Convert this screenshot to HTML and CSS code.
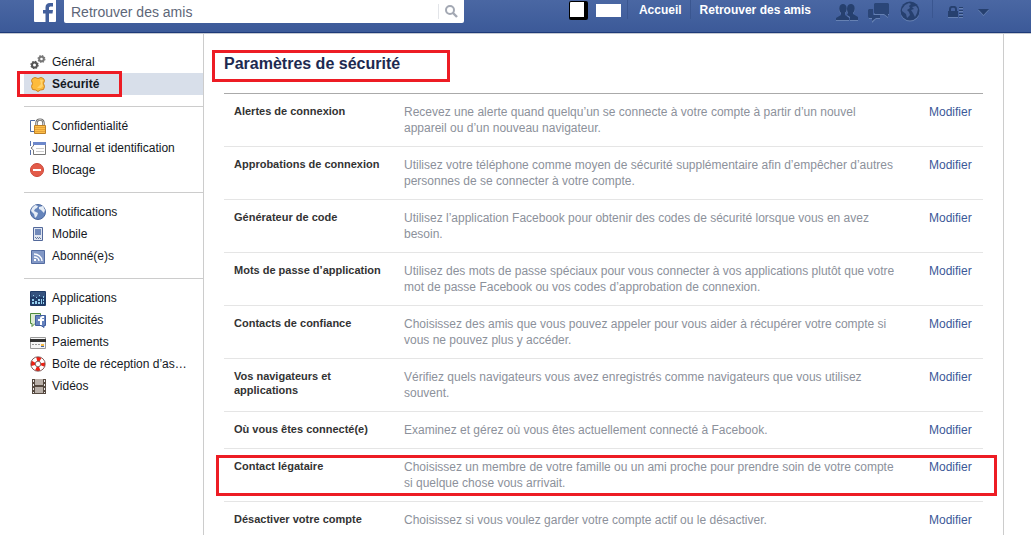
FILE: index.html
```html
<!DOCTYPE html>
<html lang="fr">
<head>
    <meta charset="UTF-8">
    <meta name="viewport" content="width=device-width, initial-scale=1.0">
    <title>Paramètres de sécurité</title>
    <link rel="stylesheet" href="styles.css">
</head>
<body>
    <header class="topbar">
        <a href="#" class="logo" aria-label="Facebook">
            <svg width="22" height="22" viewBox="0 0 22 22"><path d="M0 0h22v21a1 1 0 0 1-1 1H1a1 1 0 0 1-1-1z" fill="#fff"/><path d="M11.500 22v-8.500H9V10h2.500V7.500C11.500 4.500 13 3 16 3h3v3.500h-2c-1.500 0-2 .5-2 1.500v2h4l-.5 3.500H15V22z" fill="#43609c"/></svg>
        </a>
        <form class="search">
            <input type="text" class="search-input" placeholder="Retrouver des amis" aria-label="Retrouver des amis">
            <button type="button" class="search-btn" aria-label="Rechercher">
                <svg width="13" height="13" viewBox="0 0 13 13"><circle cx="5" cy="5" r="4" fill="none" stroke="#a3a8b3" stroke-width="2"/><path d="M8 8l4 4" stroke="#a3a8b3" stroke-width="2.4"/></svg>
            </button>
        </form>
        <nav class="top-nav">
            <span class="avatar"></span>
            <span class="username"></span>
            <a href="#" class="nav-link">Accueil</a>
            <a href="#" class="nav-link">Retrouver des amis</a>
            <a href="#" class="nav-icon friends" aria-label="Invitations">
                <svg width="22" height="19" viewBox="0 0 22 19"><g fill="#6681b3" transform="translate(0 1)"><path d="M0 17v-2l5-3v-2C2 7 3 1 7 1s5 6 2 9v2l4 3v2z"/><path d="M14 17v-3l-3-2 1-2c-2-4-1-9 3-9s5 6 2 9v1l5 3v3z"/></g><g fill="#26406f"><path d="M0 17v-2l5-3v-2C2 7 3 1 7 1s5 6 2 9v2l4 3v2z"/><path d="M14 17v-3l-3-2 1-2c-2-4-1-9 3-9s5 6 2 9v1l5 3v3z"/></g></svg>
            </a>
            <a href="#" class="nav-icon messages" aria-label="Messages">
                <svg width="22" height="20" viewBox="0 0 22 20"><g fill="#6681b3" transform="translate(0 1)"><path d="M6 0h15v11h-1v3l-4-3H6z"/><path d="M1 6h4v6h7v3H8l-4 4v-4H1z"/></g><g fill="#2b4678"><path d="M7 0h13l1 1v10h-1v3l-4-3H7l-1-1V1z"/><path d="M1 6h4v6h7v3H8l-4 3v-3H1l-1-1V7z"/></g></svg>
            </a>
            <a href="#" class="nav-icon globe" aria-label="Notifications">
                <svg width="20" height="21" viewBox="0 0 20 21"><circle cx="10" cy="11" r="9.500" fill="#6681b3"/><circle cx="10" cy="10" r="9.500" fill="#26406f"/><path d="M2 8l3-4 4-2 2 1-2 2 1 2-3 2 2 2 1 3-3 3-1-4-4-3zM12 6l4-1 2 3-1 4-2 4-2-4-2-3 3-1z" fill="#48639a"/></svg>
            </a>
            <a href="#" class="nav-icon privacy" aria-label="Confidentialité">
                <svg width="16" height="12" viewBox="0 0 16 12"><path d="M2 5V3c0-3 6-3 6 0v2" fill="none" stroke="#26406f" stroke-width="2"/><path d="M0 5h10v6H0zM11 1h4v1h-4zM11 4h4v1h-4zM11 7h4v1h-4zM11 10h4v1h-4z" fill="#26406f"/><path d="M0 11h10v1H0zM11 2h4v1h-4zM11 5h4v1h-4zM11 8h4v1h-4zM11 11h4v1h-4z" fill="#6681b3"/></svg>
            </a>
            <a href="#" class="nav-icon menu" aria-label="Menu">
                <svg width="11" height="7" viewBox="0 0 11 7"><path d="M0 1h11L5.500 7z" fill="#6681b3"/><path d="M0 0h11L5.500 6z" fill="#26406f"/></svg>
            </a>
        </nav>
    </header>

    <div class="page">
        <aside class="sidebar">
            <ul class="side-group">
                <li><a href="#" class="side-link">
                    <svg class="side-icon" viewBox="0 0 16 16"><g fill="none" stroke="#555"><circle cx="4.500" cy="11" r="2.500" stroke-width="2"/><circle cx="4.500" cy="11" r="3.600" stroke-width="1.200" stroke-dasharray="1.500 1.330"/><circle cx="11.500" cy="5" r="2.300" stroke-width="2" stroke="#777"/><circle cx="11.500" cy="5" r="3.400" stroke-width="1.200" stroke-dasharray="1.400 1.270" stroke="#777"/></g></svg>
                    <span>Général</span></a></li>
                <li><a href="#" class="side-link active">
                    <svg class="side-icon" viewBox="0 0 16 16"><path d="M2.500 2.500L5 1.500l3 1 3-1 2.500 1 1 2-1 3 1 3-1 3-3 .5L8 15.500 5.500 14l-3-.5-1-3 1-3-1-3z" fill="#fdbb3b" stroke="#c98322"/><path d="M10 4h3l-1 3 1 3-2 2H7l4-4z" fill="#ffd36d"/></svg>
                    <span>Sécurité</span></a></li>
            </ul>
            <ul class="side-group">
                <li><a href="#" class="side-link">
                    <svg class="side-icon" viewBox="0 0 16 16"><path d="M5 2.500H.5v11H5" fill="#fff" stroke="#4d6aa5"/><path d="M6.500 8V5c0-4.500 7-4.500 7 0v3" fill="none" stroke="#666" stroke-width="2.400"/><path d="M6.500 8V5c0-4.500 7-4.500 7 0v3" fill="none" stroke="#ccc"/><path d="M4.500 7.500h11v8h-11z" fill="#fdc04b" stroke="#bd8027"/><path d="M5 9.500h10M5 11.500h10M5 13.500h10" stroke="#e5a23a"/></svg>
                    <span>Confidentialité</span></a></li>
                <li><a href="#" class="side-link">
                    <svg class="side-icon" viewBox="0 0 16 16"><path d="M.5 1v5M.5 10v5" fill="none" stroke="#5872aa"/><path d="M3.500 2.500h12v12h-12V10L1 8l2.500-2z" fill="#fff" stroke="#777"/><path d="M3 2h13v3H3z" fill="#6d88cb"/><path d="M6 8.500h8M6 11.500h8" stroke="#ccc"/></svg>
                    <span>Journal et identification</span></a></li>
                <li><a href="#" class="side-link">
                    <svg class="side-icon" viewBox="0 0 16 16"><circle cx="7" cy="8" r="6.500" fill="#e35b49" stroke="#cb4638"/><path d="M3 7h8v2H3z" fill="#fff"/></svg>
                    <span>Blocage</span></a></li>
            </ul>
            <ul class="side-group">
                <li><a href="#" class="side-link">
                    <svg class="side-icon" viewBox="0 0 16 16"><circle cx="8" cy="8" r="7.500" fill="#6584bb" stroke="#4b689f"/><path d="M2 4l3-3 3 1-1 2-2 1-1 2 4 2-1 3-2 2-1-4-3-3zM9 3l4-1 2 4-1 3-3-3-2-1z" fill="#e6edf6"/></svg>
                    <span>Notifications</span></a></li>
                <li><a href="#" class="side-link">
                    <svg class="side-icon" viewBox="0 0 16 16"><path d="M3.500 1.500h9v13h-9z" fill="#dfe5f0" stroke="#53699b"/><path d="M5 3h6v6H5z" fill="#7189ba"/><path d="M5 11h1v1H5zM7 11h1v1H7zM9 11h1v1H9zM6 12h1v1H6zM8 12h1v1H8zM10 12h1v1h-1z" fill="#66799f"/></svg>
                    <span>Mobile</span></a></li>
                <li><a href="#" class="side-link">
                    <svg class="side-icon" viewBox="0 0 16 16"><path d="M1.500 2.500h13v13h-13z" fill="#8298c6" stroke="#536ba0"/><path d="M4 6c4 0 8 3 8 7M4 9c3 0 5 2 5 4" fill="none" stroke="#fff" stroke-width="1.500"/><path d="M4 11h2v2H4z" fill="#fff"/></svg>
                    <span>Abonné(e)s</span></a></li>
            </ul>
            <ul class="side-group">
                <li><a href="#" class="side-link">
                    <svg class="side-icon" viewBox="0 0 16 16"><rect y="1" width="16" height="15" rx="1" fill="#203b68"/><path d="M1 2h14v5H1z" fill="#35527f"/><path d="M2 9h2v2H2zM2 12h2v2H2zM5 11h2v3H5zM8 9h2v2H8zM8 12h2v2H8zM11 9h1v5h-1zM13 6h1v2h-1zM13 9h1v2h-1zM13 12h1v2h-1zM6 7h1v1H6zM9 5h1v1H9zM3 5h1v1H3z" fill="#94d0ef"/></svg>
                    <span>Applications</span></a></li>
                <li><a href="#" class="side-link">
                    <svg class="side-icon" viewBox="0 0 16 16"><path d="M.5 1.500h10v10H5l-3 3v-3H.5z" fill="#dcebd2" stroke="#4d8b3c"/><path d="M5.500 3.500h10v10H14v2l-3-2H5.500z" fill="#6682bd" stroke="#405e9f"/><path d="M10 13V9H8V7h2c0-3 2-3 4-3v2c-2 0-2 0-2 1h2v2h-2v4z" fill="#fff"/></svg>
                    <span>Publicités</span></a></li>
                <li><a href="#" class="side-link">
                    <svg class="side-icon" viewBox="0 0 16 16"><path d="M.5 3.500h15v11H.5z" fill="#f6f6f6" stroke="#999"/><path d="M0 5h16v3H0z" fill="#333"/><path d="M2 10.500h8" stroke="#999" stroke-dasharray="2 1"/><path d="M11 10h3v2h-3z" fill="#f5b944"/><path d="M11 12h3v1h-3z" fill="#4768ab"/></svg>
                    <span>Paiements</span></a></li>
                <li><a href="#" class="side-link">
                    <svg class="side-icon" viewBox="0 0 16 16"><circle cx="8" cy="8" r="5" fill="none" stroke="#fff" stroke-width="4"/><circle cx="8" cy="8" r="5" fill="none" stroke="#ef2115" stroke-width="4" stroke-dasharray="3.927 3.927" stroke-dashoffset="1.960"/><circle cx="8" cy="8" r="7.200" fill="none" stroke="#653b38" stroke-width=".8"/><circle cx="8" cy="8" r="2.800" fill="#fff" stroke="#653b38" stroke-width=".8"/></svg>
                    <span>Boîte de réception d’as…</span></a></li>
                <li><a href="#" class="side-link">
                    <svg class="side-icon" viewBox="0 0 16 16"><path d="M2 1h14v15H2z" fill="#554940"/><path d="M5 1h8v6H5zM5 9h8v6H5z" fill="#b9b0a9"/><path d="M3 2h1v2H3zM3 6h1v2H3zM3 10h1v2H3zM3 14h1v1H3zM14 2h1v2h-1zM14 6h1v2h-1zM14 10h1v2h-1zM14 14h1v1h-1z" fill="#eee"/></svg>
                    <span>Vidéos</span></a></li>
            </ul>
        </aside>

        <main class="content">
            <h1 class="title">Paramètres de sécurité</h1>
            <ul class="settings">
                <li class="setting">
                    <h2 class="label">Alertes de connexion</h2>
                    <p class="desc">Recevez une alerte quand quelqu’un se connecte à votre compte à partir d’un nouvel appareil ou d’un nouveau navigateur.</p>
                    <a href="#" class="edit">Modifier</a>
                </li>
                <li class="setting">
                    <h2 class="label">Approbations de connexion</h2>
                    <p class="desc">Utilisez votre téléphone comme moyen de sécurité supplémentaire afin d’empêcher d’autres personnes de se connecter à votre compte.</p>
                    <a href="#" class="edit">Modifier</a>
                </li>
                <li class="setting">
                    <h2 class="label">Générateur de code</h2>
                    <p class="desc">Utilisez l’application Facebook pour obtenir des codes de sécurité lorsque vous en avez besoin.</p>
                    <a href="#" class="edit">Modifier</a>
                </li>
                <li class="setting">
                    <h2 class="label">Mots de passe d’application</h2>
                    <p class="desc">Utilisez des mots de passe spéciaux pour vous connecter à vos applications plutôt que votre mot de passe Facebook ou vos codes d’approbation de connexion.</p>
                    <a href="#" class="edit">Modifier</a>
                </li>
                <li class="setting">
                    <h2 class="label">Contacts de confiance</h2>
                    <p class="desc">Choisissez des amis que vous pouvez appeler pour vous aider à récupérer votre compte si vous ne pouvez plus y accéder.</p>
                    <a href="#" class="edit">Modifier</a>
                </li>
                <li class="setting">
                    <h2 class="label">Vos navigateurs et applications</h2>
                    <p class="desc">Vérifiez quels navigateurs vous avez enregistrés comme navigateurs que vous utilisez souvent.</p>
                    <a href="#" class="edit">Modifier</a>
                </li>
                <li class="setting">
                    <h2 class="label">Où vous êtes connecté(e)</h2>
                    <p class="desc">Examinez et gérez où vous êtes actuellement connecté à Facebook.</p>
                    <a href="#" class="edit">Modifier</a>
                </li>
                <li class="setting marked">
                    <h2 class="label">Contact légataire</h2>
                    <p class="desc">Choisissez un membre de votre famille ou un ami proche pour prendre soin de votre compte si quelque chose vous arrivait.</p>
                    <a href="#" class="edit">Modifier</a>
                </li>
                <li class="setting">
                    <h2 class="label">Désactiver votre compte</h2>
                    <p class="desc">Choisissez si vous voulez garder votre compte actif ou le désactiver.</p>
                    <a href="#" class="edit">Modifier</a>
                </li>
            </ul>
        </main>
    </div>
</body>
</html>
```
FILE: styles.css
```css
*,
*::after {
    margin: 0;
    padding: 0;
    box-sizing: border-box;
}

body {
    min-height: 100vh;
    display: flex;
    flex-direction: column;
    background: #fff;
    font-family: "Liberation Sans", Arial, sans-serif;
    font-size: 12px;
    line-height: 16px;
    color: #141823;
}

ul {
    list-style: none;
}

a {
    color: #3b5998;
    text-decoration: none;
}

svg {
    display: block;
}

/* Top bar */
.topbar {
    display: flex;
    align-items: flex-start;
    height: 34px;
    padding: 0 42px 0 34px;
    background: linear-gradient(#4a67a3, #3b5998);
    border-bottom: 1px solid #c5c9d1;
    box-shadow: inset 0 -1px 0 #1d3978;
}

.search {
    display: flex;
    align-items: center;
    width: 400px;
    height: 23px;
    margin-left: 8px;
    background: #fff;
    border-radius: 0 0 2px 2px;
}

.search-input {
    flex: 1;
    min-width: 0;
    height: 22px;
    padding: 0 7px;
    border: 0;
    outline: 0;
    background: none;
    font-family: inherit;
    font-size: 14px;
}

.search-input::placeholder {
    color: #5d6678;
    opacity: 1;
}

.search-btn {
    height: 15px;
    padding: 0 6px;
    border: 0;
    border-left: 1px solid #e3e5e9;
    background: none;
}

.top-nav {
    display: flex;
    align-items: flex-start;
    margin-left: auto;
}

.avatar {
    width: 19px;
    height: 19px;
    margin-top: 1px;
    background: #fff;
    border: solid #000;
    border-width: 1px 4px 3px 1px;
    border-radius: 2px;
}

.username {
    width: 25px;
    height: 13px;
    margin: 4px 6px 0 8px;
    background: #fff;
}

.nav-link {
    height: 19px;
    padding: 2px 8px 0 11px;
    border-left: 1px solid #3a5690;
    color: #fff;
    font-weight: bold;
}

.nav-link + .nav-link {
    padding: 2px 0 0 9px;
}

.nav-icon {
    padding-top: 3px;
}

.friends {
    margin-left: 25px;
}

.messages {
    margin-left: 10px;
}

.globe {
    padding-top: 1px;
    margin-left: 10px;
}

.privacy {
    height: 18px;
    padding: 6px 0 0 15px;
    margin-left: 12px;
    border-left: 1px solid #3a5690;
}

.menu {
    padding-top: 9px;
    margin-left: 14px;
}

/* Page columns */
.page {
    flex: 1;
    display: flex;
    padding: 0 27px 0 24px;
}

.sidebar {
    width: 179px;
    padding-top: 17px;
}

.side-group + .side-group {
    margin-top: 11px;
    padding-top: 8px;
    border-top: 1px solid #ccc;
}

.side-link {
    position: relative;
    display: flex;
    align-items: center;
    gap: 6px;
    height: 22px;
    padding: 0 12px 0 6px;
    color: #141823;
    white-space: nowrap;
}

.side-icon {
    flex: none;
    width: 16px;
    height: 16px;
}

.active {
    background: #d8dfea;
    font-weight: bold;
}

.content {
    flex: 1;
    min-width: 0;
    padding: 20px 20px 0;
    border: solid #ccc;
    border-width: 0 1px;
}

.title {
    position: relative;
    padding-bottom: 19px;
    border-bottom: 1px solid #aaa;
    font-size: 16px;
    line-height: 20px;
    color: #1d2a50;
}

/* Settings list */
.setting {
    position: relative;
    display: grid;
    grid-template-columns: 170px 1fr 54px;
    padding: 10px 0 10px 10px;
    border-bottom: 1px solid #e5e5e5;
}

.setting:last-child {
    padding-bottom: 5px;
    border-bottom: 0;
}

.label {
    padding-right: 20px;
    font-size: 11px;
    line-height: 14px;
    color: #333;
}

.desc {
    padding-right: 31px;
    color: #8c919b;
}

/* Red highlight frames */
.active::after,
.title::after,
.marked::after {
    content: "";
    position: absolute;
    border: 3px solid #ed1c24;
    pointer-events: none;
}

.active::after {
    top: -2px;
    left: -7px;
    width: 105px;
    height: 26px;
}

.title::after {
    top: -4px;
    left: -12px;
    width: 238px;
    height: 32px;
}

.marked::after {
    top: 6px;
    left: -8px;
    right: -14px;
    bottom: 5px;
}
```
